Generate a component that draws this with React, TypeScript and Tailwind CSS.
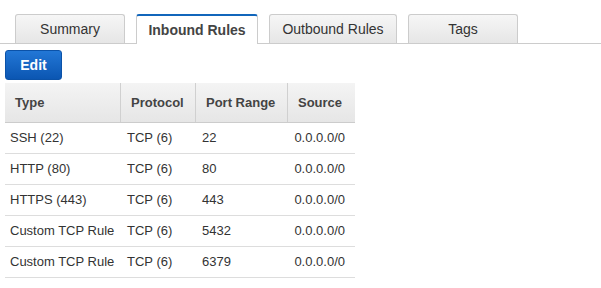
import React from "react";

const tabs = [
  { label: "Summary", w: "w-[110px]", active: false },
  { label: "Inbound Rules", w: "w-[122px]", active: true },
  { label: "Outbound Rules", w: "w-[128px]", active: false },
  { label: "Tags", w: "w-[110px]", active: false },
];

const rows = [
  ["SSH (22)", "TCP (6)", "22", "0.0.0.0/0"],
  ["HTTP (80)", "TCP (6)", "80", "0.0.0.0/0"],
  ["HTTPS (443)", "TCP (6)", "443", "0.0.0.0/0"],
  ["Custom TCP Rule", "TCP (6)", "5432", "0.0.0.0/0"],
  ["Custom TCP Rule", "TCP (6)", "6379", "0.0.0.0/0"],
];

export default function App() {
  return (
    <div
      className="w-[601px] h-[288px] bg-white overflow-hidden"
      style={{ fontFamily: '"Liberation Sans", Arial, sans-serif' }}
    >
      <div className="flex gap-[11px] pt-[14px] pl-[15px] border-b border-[#cccccc]">
        {tabs.map((t) =>
          t.active ? (
            <div
              key={t.label}
              className={`${t.w} h-[30px] -mb-px flex items-center justify-center bg-white border-x border-[#cccccc] border-t-2 border-t-[#1166bb] rounded-t-[3px] text-[14px] font-bold text-[#444444]`}
            >
              {t.label}
            </div>
          ) : (
            <div
              key={t.label}
              className={`${t.w} h-[29px] flex items-center justify-center bg-gradient-to-b from-[#f6f6f6] to-[#e6e6e6] border-x border-t border-[#cccccc] rounded-t-[3px] text-[14px] text-[#333333]`}
            >
              {t.label}
            </div>
          )
        )}
      </div>
      <div className="pl-[5px] pt-[6px]">
        <button className="w-[57px] h-[30px] rounded-[3px] bg-gradient-to-b from-[#2277d6] to-[#0b56b2] border border-[#0b52a8] text-white font-bold text-[14px] flex items-center justify-center">
          Edit
        </button>
      </div>
      <div className="ml-[5px] mt-[3px] w-[350px] text-[13px]">
        <div className="flex h-[40px] bg-gradient-to-b from-[#f4f4f4] to-[#e6e6e6] border-b border-[#cccccc] font-bold text-[#444444]">
          <div className="w-[116px] pl-[10px] flex items-center border-r border-[#d0d0d0]">Type</div>
          <div className="w-[75px] pl-[10px] flex items-center border-r border-[#d0d0d0]">Protocol</div>
          <div className="w-[92px] pl-[10px] flex items-center border-r border-[#d0d0d0]">Port Range</div>
          <div className="flex-1 pl-[10px] flex items-center">Source</div>
        </div>
        {rows.map((r, i) => (
          <div key={i} className="flex h-[31px] border-b border-[#dddddd] text-[#333333]">
            <div className="w-[116px] pl-[5px] flex items-center">{r[0]}</div>
            <div className="w-[75px] pl-[6px] flex items-center">{r[1]}</div>
            <div className="w-[92px] pl-[6px] flex items-center">{r[2]}</div>
            <div className="flex-1 pr-[10px] flex items-center justify-end">{r[3]}</div>
          </div>
        ))}
      </div>
    </div>
  );
}
